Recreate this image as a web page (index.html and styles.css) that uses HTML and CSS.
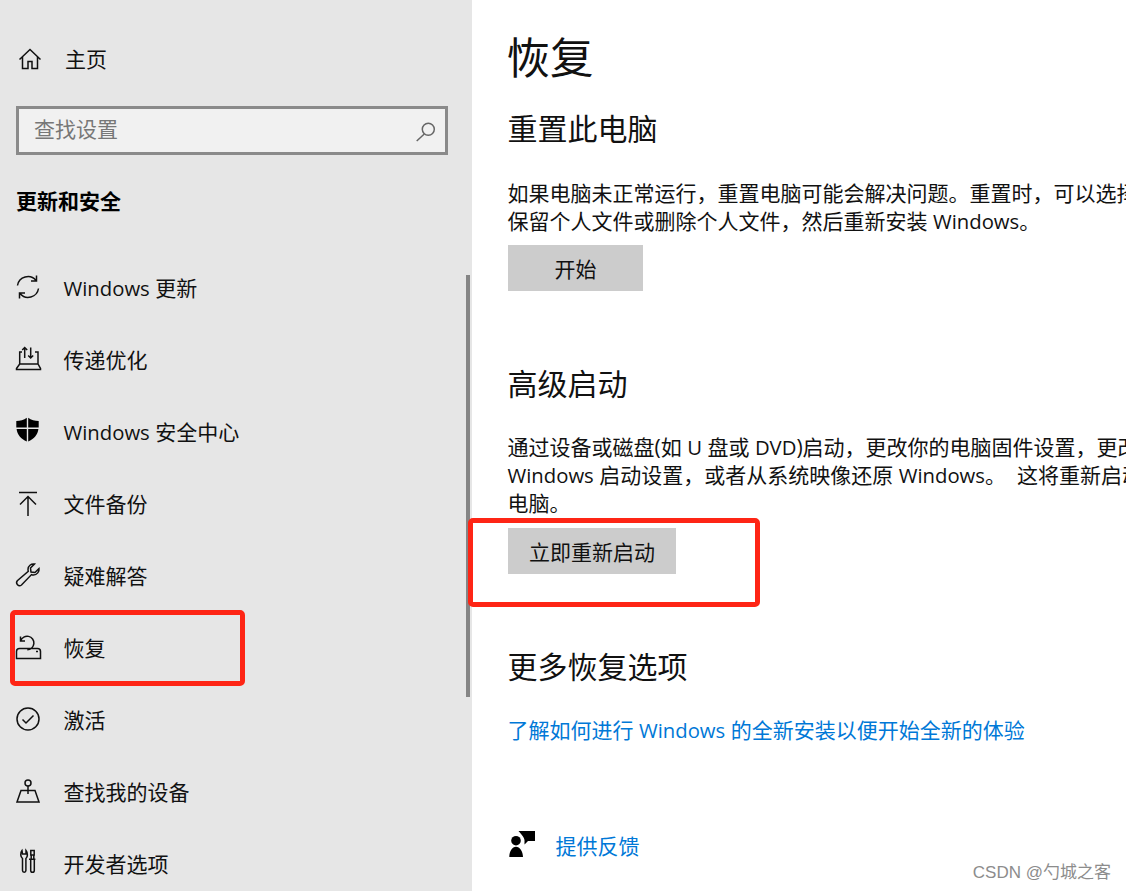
FILE: index.html
```html
<!DOCTYPE html>
<html lang="zh-CN">
<head>
<meta charset="utf-8">
<title>恢复</title>
<link rel="stylesheet" href="styles.css">
</head>
<body>
<div class="app">
  <aside class="sidebar">
    <div class="home">
      <svg class="icon" viewBox="0 0 24 24"><path d="M1.500 12.500 12 2.500l10.500 10M4.500 10v11.500h5.500v-7h4v7h5.500V10"/></svg>
      <span>主页</span>
    </div>
    <div class="search">
      <span class="placeholder">查找设置</span>
      <svg class="search-icon" viewBox="0 0 20 20"><circle cx="12.300" cy="8.300" r="6"/><path d="M8.300 13 .7 20"/></svg>
    </div>
    <h2 class="section">更新和安全</h2>
    <nav class="nav">
      <div class="item">
        <svg class="icon" viewBox="0 0 24 24"><path d="M1.500 10.500A10.500 10.500 0 0 1 20 5.500M22.500 13.500A10.500 10.500 0 0 1 4 18.500M20.500 .5v5.500h-5.500M3.500 23.500V18h5.500"/></svg>
        <span><span class="latin">Windows</span> 更新</span>
      </div>
      <div class="item">
        <svg class="icon" viewBox="0 0 24 24"><path d="M6 5H3.700v12M19 5h3v12M3.700 17 .5 21.500v1h24v-1L22 17zM8.700 11V.5M6.200 3l2.500-2.500L11.200 3M14.700 .5V11M12.200 8.500l2.500 2.500 2.500-2.500"/></svg>
        <span>传递优化</span>
      </div>
      <div class="item">
        <svg class="icon" viewBox="0 0 24 24"><path class="solid" d="M10.800-1.300C8 .8 4 2 .3 2v6.600h10.500zM12.200-1.300C15 .8 19 2 22.700 2v6.600H12.200zM.6 10C1.200 15.500 5 20 10.800 22.500V10zM22.400 10C21.800 15.500 18 20 12.200 22.500V10z"/></svg>
        <span><span class="latin">Windows</span> 安全中心</span>
      </div>
      <div class="item">
        <svg class="icon" viewBox="0 0 24 24"><path d="M3 1.500h18M12 25V5.500M4 13.500l8-8 8 8"/></svg>
        <span>文件备份</span>
      </div>
      <div class="item">
        <svg class="icon" viewBox="0 0 24 24"><path d="M23 5.500c.5 3-2 6.500-5.500 6.500-.8 0-1.500-.1-2-.4L5.500 22a3 3 0 0 1-4-.3 3 3 0 0 1-.2-3.900L12.300 8.200c-.2-.6-.3-1.200-.3-2C12 3 15 .5 18.500 1l-4 4 .5 4 4 .5z"/></svg>
        <span>疑难解答</span>
      </div>
      <div class="item">
        <svg class="icon" viewBox="0 0 24 24"><path d="M4.700 5.700A6.800 6.800 0 1 1 11.300 14.800M4.500 1.500V6H9M3.500 13.500h18c1.800 0 3 1.200 3 3v7H.5v-7c0-1.800 1.200-3 3-3zM20 16.500h2"/></svg>
        <span>恢复</span>
      </div>
      <div class="item">
        <svg class="icon" viewBox="0 0 24 24"><circle cx="12" cy="12" r="11"/><path d="m6.500 12.500 3.500 3.500 7.500-7.500"/></svg>
        <span>激活</span>
      </div>
      <div class="item">
        <svg class="icon" viewBox="0 0 24 24"><circle cx="12" cy="4" r="3"/><path d="M12 7v8M5 11.500h14l4 11.500H1z"/></svg>
        <span>查找我的设备</span>
      </div>
      <div class="item">
        <svg class="icon" viewBox="0 0 24 24"><path d="M6-.5C4 2 4.500 6 6.500 7.500v12a1.700 1.700 0 0 0 3.400 0v-12C11.800 6 12 2 10-.5V3H6.500zM14.800-.5h3.400V4h-3.400zM15.200 4v4.300M17.800 4v4.300M13 8.300h6.400M14.700 8.300v11.200a1.800 1.800 0 0 0 3.600 0V8.300"/></svg>
        <span>开发者选项</span>
      </div>
    </nav>
    <div class="scrollbar"></div>
  </aside>
  <main class="main">
    <h1 class="title">恢复</h1>
    <section class="block first">
      <h2 class="heading">重置此电脑</h2>
      <p class="text">如果电脑未正常运行，重置电脑可能会解决问题。重置时，可以选择<br>保留个人文件或删除个人文件，然后重新安装 <span class="latin">Windows</span>。</p>
      <button class="btn btn-start">开始</button>
    </section>
    <section class="block second">
      <h2 class="heading">高级启动</h2>
      <p class="text">通过设备或磁盘(如 <span class="latin">U</span> 盘或 <span class="latin">DVD</span>)启动，更改你的电脑固件设置，更改<br><span class="latin">Windows</span> 启动设置，或者从系统映像还原 <span class="latin">Windows</span>。&nbsp; 这将重新启动<br>电脑。</p>
      <button class="btn btn-restart">立即重新启动</button>
    </section>
    <section class="block third">
      <h2 class="heading">更多恢复选项</h2>
      <a class="link learn">了解如何进行 <span class="latin">Windows</span> 的全新安装以便开始全新的体验</a>
    </section>
    <div class="feedback">
      <svg class="fb-icon" viewBox="0 0 28 28"><circle cx="8" cy="9.700" r="4.800"/><path d="M1.300 26c0-6 3-10.300 6.700-10.300S15 20 15 26zM10.500 0H27v10h-7l-3.500 3.500V9C16 6.500 14 4 10.500 0z"/></svg>
      <a class="link">提供反馈</a>
    </div>
  </main>
</div>
<div class="mark mark-left"></div>
<div class="mark mark-right"></div>
<div class="watermark">CSDN @勺城之客</div>
</body>
</html>
```
FILE: styles.css
```css
* { box-sizing: border-box; }
html, body { margin: 0; padding: 0; }
body {
  width: 1126px;
  height: 891px;
  overflow: hidden;
  position: relative;
  background: #fff;
  color: #111;
  font-family: "Open Sans", "Noto Sans CJK SC", sans-serif;
  font-size: 21px;
}
.latin { font-size: 20.300px; }
.app { display: flex; height: 891px; }
.sidebar {
  position: relative;
  flex: 0 0 472px;
  background: #e6e6e6;
  padding: 43px 0 0 16px;
  overflow: hidden;
}
.icon { width: 24px; height: 24px; flex: none; fill: none; stroke: #111; stroke-width: 1.500; overflow: visible; }
.solid { fill: #000; stroke: none; }
.home { display: flex; align-items: center; gap: 23px; height: 32px; padding-left: 2px; line-height: 32px; }
.search {
  display: flex;
  align-items: center;
  justify-content: space-between;
  width: 432px;
  height: 49px;
  margin-top: 31px;
  padding: 0 9px 0 15px;
  background: #f1f1f1;
  border: 3px solid #8a8a8a;
}
.placeholder { color: #777; padding-bottom: 6px; }
.search-icon { width: 20px; height: 20px; fill: none; stroke: #666; stroke-width: 1.500; overflow: visible; }
.section { margin: 30px 0 0; font-size: 21px; font-weight: 700; line-height: 32px; color: #000; }
.nav { margin-top: 34px; }
.item { display: flex; align-items: center; gap: 23.500px; height: 72px; }
.scrollbar { position: absolute; left: 466px; top: 275px; width: 4px; height: 422px; background: #858585; }
.main { flex: 1; min-width: 0; padding: 0 0 0 35.500px; overflow: hidden; white-space: nowrap; }
.title { margin: 28px 0 0 -1px; font-size: 43.500px; font-weight: 400; line-height: 60px; }
.heading { margin: 0; font-size: 30px; font-weight: 400; line-height: 44px; }
.text { margin: 28px 0 0; line-height: 28px; }
.second .text { margin-top: 27px; }
.btn {
  display: block;
  height: 46px;
  margin: 10px 0 0 .5px;
  padding: 0;
  border: 0;
  background: #ccc;
  color: #111;
  font: inherit;
}
.btn-start { width: 135px; }
.btn-restart { width: 168px; margin-top: 11px; }
.first { margin-top: 19px; }
.second { margin-top: 71px; }
.third { margin-top: 71px; }
.link { color: #0078d7; }
.learn { display: block; margin-top: 25px; line-height: 32px; }
.feedback { display: flex; align-items: center; gap: 19.500px; height: 32px; margin-top: 83px; padding-left: .5px; }
.fb-icon { width: 28px; height: 28px; flex: none; fill: #000; }
.mark { position: absolute; border: 5px solid #fe2515; border-radius: 5px; }
.mark-left { left: 10px; top: 610px; width: 235px; height: 76px; }
.mark-right { left: 468px; top: 518px; width: 292px; height: 89px; }
.watermark {
  position: absolute;
  right: 15px;
  top: 862px;
  font-family: "Liberation Sans", "Noto Sans CJK SC", sans-serif;
  font-size: 17px;
  line-height: 22px;
  color: #8c8c8c;
}
```
